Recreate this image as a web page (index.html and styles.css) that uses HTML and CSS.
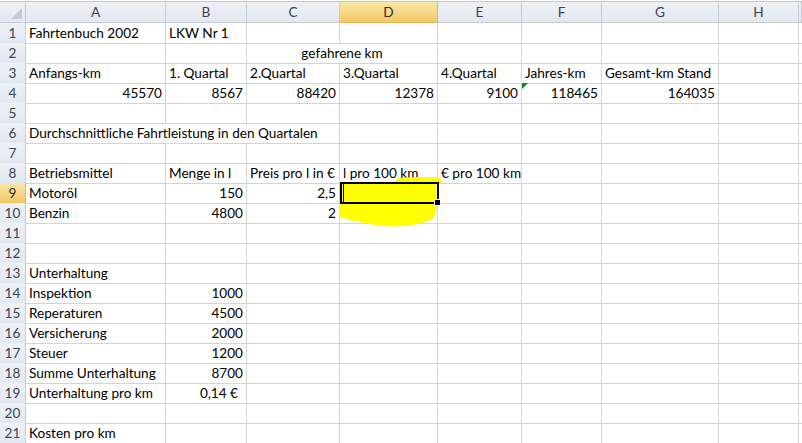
FILE: index.html
```html
<!DOCTYPE html>
<html lang="de">
<head>
<meta charset="utf-8">
<title>Fahrtenbuch 2002</title>
<link rel="stylesheet" href="styles.css">
</head>
<body>
<div class="sheet">
  <div class="r head">
    <div class="h corner"><svg width="25" height="20" viewBox="0 0 25 20"><polygon points="22,6 22,17 11,17" fill="#c6cbd2"/></svg></div>
    <div class="h">A</div><div class="h">B</div><div class="h">C</div><div class="h hsel">D</div><div class="h">E</div><div class="h">F</div><div class="h">G</div><div class="h">H</div><div class="h"></div>
  </div>
  <div class="r"><div class="h">1</div><div class="c">Fahrtenbuch 2002</div><div class="c">LKW Nr 1</div><div class="c"></div><div class="c"></div><div class="c"></div><div class="c"></div><div class="c"></div><div class="c"></div><div class="c"></div></div>
  <div class="r"><div class="h">2</div><div class="c"></div><div class="c"></div><div class="c s2 ctr">gefahrene km</div><div class="c"></div><div class="c"></div><div class="c"></div><div class="c"></div><div class="c"></div></div>
  <div class="r"><div class="h">3</div><div class="c">Anfangs-km</div><div class="c">1. Quartal</div><div class="c">2.Quartal</div><div class="c">3.Quartal</div><div class="c">4.Quartal</div><div class="c">Jahres-km</div><div class="c">Gesamt-km Stand</div><div class="c"></div><div class="c"></div></div>
  <div class="r"><div class="h">4</div><div class="c n">45570</div><div class="c n">8567</div><div class="c n">88420</div><div class="c n">12378</div><div class="c n">9100</div><div class="c n"><span class="err"></span>118465</div><div class="c n">164035</div><div class="c"></div><div class="c"></div></div>
  <div class="r"><div class="h">5</div><div class="c"></div><div class="c"></div><div class="c"></div><div class="c"></div><div class="c"></div><div class="c"></div><div class="c"></div><div class="c"></div><div class="c"></div></div>
  <div class="r"><div class="h">6</div><div class="c s3">Durchschnittliche Fahrtleistung in den Quartalen</div><div class="c"></div><div class="c"></div><div class="c"></div><div class="c"></div><div class="c"></div><div class="c"></div></div>
  <div class="r"><div class="h">7</div><div class="c"></div><div class="c"></div><div class="c"></div><div class="c"></div><div class="c"></div><div class="c"></div><div class="c"></div><div class="c"></div><div class="c"></div></div>
  <div class="r"><div class="h">8</div><div class="c">Betriebsmittel</div><div class="c">Menge in l</div><div class="c">Preis pro l in €</div><div class="c">l pro 100 km</div><div class="c">€ pro 100 km</div><div class="c"></div><div class="c"></div><div class="c"></div><div class="c"></div></div>
  <div class="r"><div class="h hsel">9</div><div class="c">Motoröl</div><div class="c n">150</div><div class="c n">2,5</div><div class="c sel"></div><div class="c"></div><div class="c"></div><div class="c"></div><div class="c"></div><div class="c"></div></div>
  <div class="r"><div class="h">10</div><div class="c">Benzin</div><div class="c n">4800</div><div class="c n">2</div><div class="c"></div><div class="c"></div><div class="c"></div><div class="c"></div><div class="c"></div><div class="c"></div></div>
  <div class="r"><div class="h">11</div><div class="c"></div><div class="c"></div><div class="c"></div><div class="c"></div><div class="c"></div><div class="c"></div><div class="c"></div><div class="c"></div><div class="c"></div></div>
  <div class="r"><div class="h">12</div><div class="c"></div><div class="c"></div><div class="c"></div><div class="c"></div><div class="c"></div><div class="c"></div><div class="c"></div><div class="c"></div><div class="c"></div></div>
  <div class="r"><div class="h">13</div><div class="c">Unterhaltung</div><div class="c"></div><div class="c"></div><div class="c"></div><div class="c"></div><div class="c"></div><div class="c"></div><div class="c"></div><div class="c"></div></div>
  <div class="r"><div class="h">14</div><div class="c">Inspektion</div><div class="c n">1000</div><div class="c"></div><div class="c"></div><div class="c"></div><div class="c"></div><div class="c"></div><div class="c"></div><div class="c"></div></div>
  <div class="r"><div class="h">15</div><div class="c">Reperaturen</div><div class="c n">4500</div><div class="c"></div><div class="c"></div><div class="c"></div><div class="c"></div><div class="c"></div><div class="c"></div><div class="c"></div></div>
  <div class="r"><div class="h">16</div><div class="c">Versicherung</div><div class="c n">2000</div><div class="c"></div><div class="c"></div><div class="c"></div><div class="c"></div><div class="c"></div><div class="c"></div><div class="c"></div></div>
  <div class="r"><div class="h">17</div><div class="c">Steuer</div><div class="c n">1200</div><div class="c"></div><div class="c"></div><div class="c"></div><div class="c"></div><div class="c"></div><div class="c"></div><div class="c"></div></div>
  <div class="r"><div class="h">18</div><div class="c">Summe Unterhaltung</div><div class="c n">8700</div><div class="c"></div><div class="c"></div><div class="c"></div><div class="c"></div><div class="c"></div><div class="c"></div><div class="c"></div></div>
  <div class="r"><div class="h">19</div><div class="c">Unterhaltung pro km</div><div class="c n acc">0,14 €</div><div class="c"></div><div class="c"></div><div class="c"></div><div class="c"></div><div class="c"></div><div class="c"></div><div class="c"></div></div>
  <div class="r"><div class="h">20</div><div class="c"></div><div class="c"></div><div class="c"></div><div class="c"></div><div class="c"></div><div class="c"></div><div class="c"></div><div class="c"></div><div class="c"></div></div>
  <div class="r"><div class="h">21</div><div class="c">Kosten pro km</div><div class="c"></div><div class="c"></div><div class="c"></div><div class="c"></div><div class="c"></div><div class="c"></div><div class="c"></div><div class="c"></div></div>

  <svg class="paint" width="802" height="443" viewBox="0 0 802 443">
    <path d="M395,183 L397,179 L405,177.5 L420,177 L432,177 L438,177.5 L441,179 L441,183 Z" fill="#ffff00"/>
    <path d="M339,203 L437,203 L436,212 L434,218 L428,221 L418,224 L405,226 L390,226.5 L375,225 L362,222.5 L350,220 L343,218 L339,216 Z" fill="#ffff00"/>
  </svg>
  <div class="selbox"><span class="handle"></span></div>
</div>
</body>
</html>
```

FILE: styles.css
```css
* {
  box-sizing: border-box;
  margin: 0;
  padding: 0;
}

html,
body {
  width: 802px;
  height: 443px;
  overflow: hidden;
  background: #ffffff;
}

body {
  font-family: Lato, "Open Sans", sans-serif;
  font-size: 13.6px;
  color: #000000;
}

.sheet {
  position: relative;
  width: 802px;
  height: 443px;
  padding-top: 1px;
  overflow: hidden;
}

.r {
  display: grid;
  grid-template-columns: 26px 140px 81px 93px 98px 84px 80px 117px 80px 3px;
  height: 20px;
}

.r.head {
  height: 22px;
}

.c {
  position: relative;
  border-right: 1px solid #d4d4d4;
  border-bottom: 1px solid #d4d4d4;
  padding: 1px 3px 0;
  line-height: 19px;
  white-space: nowrap;
}

.n {
  text-align: right;
}

.acc {
  padding-right: 8px;
}

.ctr {
  text-align: center;
}

.s2 {
  grid-column: span 2;
}

.s3 {
  grid-column: span 3;
}

.h {
  background: linear-gradient(#eef2f7, #e2e8f0);
  border-right: 1px solid #c5ccd6;
  border-bottom: 1px solid #c5ccd6;
  color: #3c4452;
  text-align: center;
  padding-top: 1px;
  line-height: 19px;
}

.head .h {
  border-top: 1px solid #c3c9d1;
  padding-top: 1px;
  line-height: 19px;
}

.head .corner {
  padding-top: 0;
}

.corner svg {
  display: block;
}

.h.hsel {
  background: linear-gradient(#fbe7a8, #f3c964);
  border-right-color: #e9b354;
  border-bottom-color: #e9b354;
  color: #2c2c2c;
}

.sel {
  background: #ffff00;
}

.err {
  position: absolute;
  left: 0;
  top: 0;
  width: 0;
  height: 0;
  border-top: 6px solid #217a21;
  border-right: 6px solid transparent;
}

.paint {
  position: absolute;
  left: 0;
  top: 0;
  pointer-events: none;
}

.selbox {
  position: absolute;
  left: 340px;
  top: 182px;
  width: 99px;
  height: 22px;
  border: 2px solid #000000;
}

.selbox::after {
  content: "";
  position: absolute;
  left: 1px;
  top: 0;
  bottom: 0;
  width: 1px;
  background: #000000;
}

.handle {
  position: absolute;
  right: -4px;
  bottom: -4px;
  width: 5px;
  height: 5px;
  background: #000000;
  border: 1px solid #ffffff;
  box-sizing: content-box;
}
```
